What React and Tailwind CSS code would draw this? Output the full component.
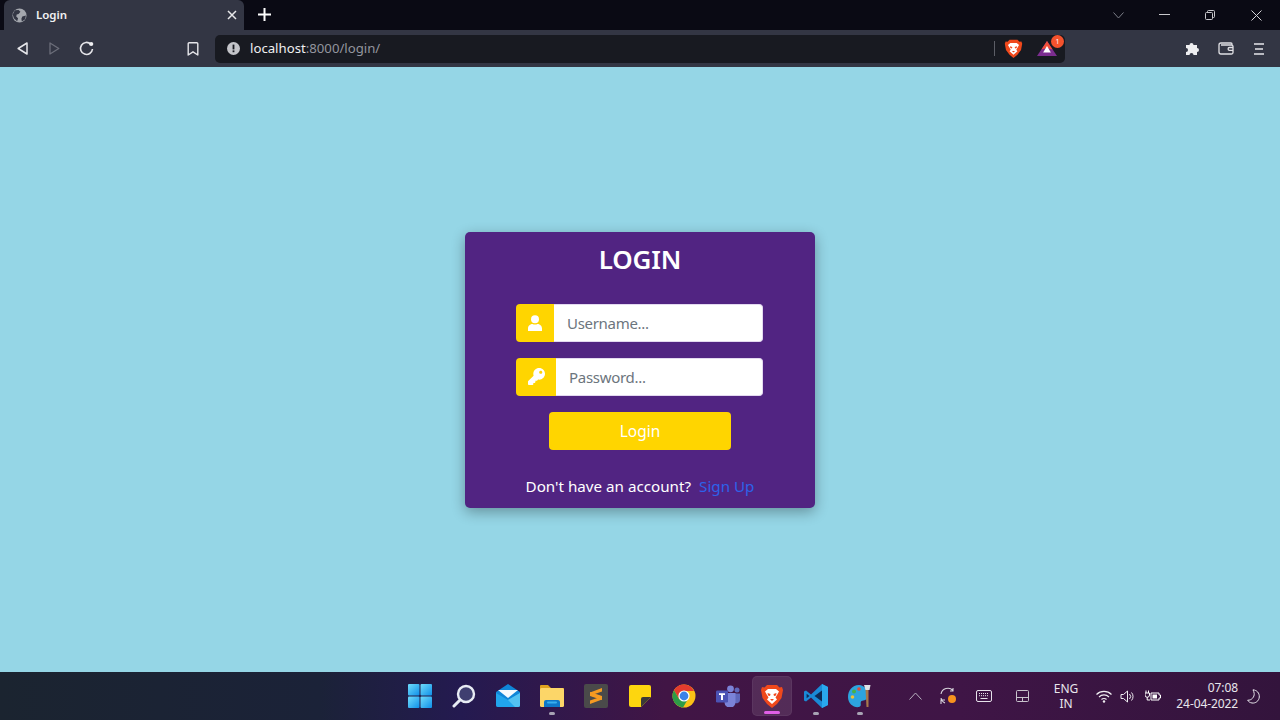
import React from "react";

function Win() {
  return (
    <svg width="24" height="24" viewBox="0 0 24 24">
      <defs>
        <linearGradient id="w" x1="0" y1="0" x2="1" y2="1">
          <stop offset="0" stopColor="#6fdcfb" />
          <stop offset="1" stopColor="#0f8fe8" />
        </linearGradient>
      </defs>
      <rect x="0" y="0" width="11.5" height="11.5" rx="1" fill="url(#w)" />
      <rect x="12.5" y="0" width="11.5" height="11.5" rx="1" fill="url(#w)" />
      <rect x="0" y="12.5" width="11.5" height="11.5" rx="1" fill="url(#w)" />
      <rect x="12.5" y="12.5" width="11.5" height="11.5" rx="1" fill="url(#w)" />
    </svg>
  );
}
function Search() {
  return (
    <svg width="24" height="24" viewBox="0 0 24 24" fill="none">
      <circle cx="14" cy="10" r="8" fill="#3f3f70" stroke="#e8ecf4" strokeWidth="2.4" />
      <path d="M8 16 L2 22" stroke="#e8ecf4" strokeWidth="3" strokeLinecap="round" />
    </svg>
  );
}
function Mail() {
  return (
    <svg width="26" height="24" viewBox="0 0 26 24">
      <path d="M1 8 L13 0 L25 8 V21 a2 2 0 0 1 -2 2 H3 a2 2 0 0 1 -2 -2 Z" fill="#0f86d8" />
      <path d="M3 6 H23 L13 14 Z" fill="#f4fafe" />
      <path d="M1 9 L13 16 L25 9 V21 a2 2 0 0 1 -2 2 H3 a2 2 0 0 1 -2 -2 Z" fill="#21a5ec" />
      <path d="M13 16 L25 9 V21 a2 2 0 0 1 -2 2 H20 Z" fill="#53c2f2" />
    </svg>
  );
}
function Folder() {
  return (
    <svg width="26" height="24" viewBox="0 0 26 24">
      <path d="M1 2 a1 1 0 0 1 1 -1 H9 L12 4 H24 a1 1 0 0 1 1 1 V8 H1 Z" fill="#e0a31f" />
      <rect x="1" y="4" width="24" height="19" rx="1.5" fill="#fcd668" />
      <path d="M5 23 V18 a2 2 0 0 1 2 -2 H19 a2 2 0 0 1 2 2 V23 Z" fill="#0f78c8" />
      <rect x="8" y="17.5" width="10" height="2" rx="1" fill="#39b0ee" />
    </svg>
  );
}
function Sublime() {
  return (
    <svg width="24" height="24" viewBox="0 0 24 24">
      <rect width="24" height="24" rx="2" fill="#4a4a4a" />
      <path d="M18 4 L6 8.5 V12 L18 16 V12.5 L10 10.2 L18 7.5 Z" fill="#f59a22" />
      <path d="M6 20 L18 15.5 V12 L6 8 V11.5 L14 13.8 L6 16.5 Z" fill="#f59a22" />
    </svg>
  );
}
function Sticky() {
  return (
    <svg width="22" height="22" viewBox="0 0 22 22">
      <path d="M0 2 a2 2 0 0 1 2 -2 H20 a2 2 0 0 1 2 2 V12 L12 22 H2 a2 2 0 0 1 -2 -2 Z" fill="#fdd60f" />
      <path d="M12 22 V14 a2 2 0 0 1 2 -2 H22 Z" fill="#3a3a38" />
    </svg>
  );
}
function Chrome() {
  return (
    <svg width="24" height="24" viewBox="0 0 24 24">
      <circle cx="12" cy="12" r="11.5" fill="#fbc116" />
      <path d="M12 .5 A11.5 11.5 0 0 0 2 6.3 L7 15 L12 7 H22 A11.5 11.5 0 0 0 12 .5Z" fill="#e33b2e" />
      <path d="M2 6.3 A11.5 11.5 0 0 0 11 23.5 L16 15 H7 Z" fill="#2d9b47" />
      <circle cx="12" cy="12" r="5.6" fill="#fff" />
      <circle cx="12" cy="12" r="4.4" fill="#3b82e8" />
    </svg>
  );
}
function Teams() {
  return (
    <svg width="24" height="22" viewBox="0 0 24 22">
      <circle cx="14.5" cy="3.8" r="3.4" fill="#7b83d8" />
      <circle cx="21" cy="5" r="2.5" fill="#5f67bb" />
      <path d="M18 8.5 H24 V15 a3.5 3.5 0 0 1 -5 3 Z" fill="#5f67bb" />
      <path d="M8 8 H19.5 V17 a5.5 5.5 0 0 1 -11 .5 Z" fill="#7b83d8" />
      <rect x="0" y="5.5" width="12" height="12" rx="1.3" fill="#4b53b4" />
      <path d="M3 8.3 H9 V10 H7 V15 H5 V10 H3 Z" fill="#fff" />
    </svg>
  );
}
function Lion({ size = 24 }) {
  return (
    <svg width={size} height={size} viewBox="0 0 24 24">
      <path d="M7 1 H17 L19.5 3.5 L22 3 L23 6 L21.5 14 L17 20 L12 24 L7 20 L2.5 14 L1 6 L2 3 L4.5 3.5 Z" fill="#f0491c" />
      <path d="M8 5 H16 L19 7.5 L17 11 L15.5 13.5 L17 15.5 L12 20 L7 15.5 L8.5 13.5 L7 11 L5 7.5 Z" fill="#fff" />
      <path d="M7.5 9 L10.5 10 L10 12 L8 11.5 Z M16.5 9 L13.5 10 L14 12 L16 11.5 Z" fill="#f0491c" />
      <path d="M10 15 H14 L12 17 Z" fill="#f0491c" />
    </svg>
  );
}
function VSCode() {
  return (
    <svg width="26" height="26" viewBox="0 0 26 26">
      <path d="M19 1 L25 4 V22 L19 25 L8 14.5 L3 18.5 L1 17.5 V8.5 L3 7.5 L8 11.5 Z" fill="#1a8ad6" />
      <path d="M19 7.5 L11.5 13 L19 18.5 Z" fill="#0c2a56" />
      <path d="M19 1 L25 4 V22 L19 25 Z" fill="#29a8ee" />
      <path d="M3.6 10.8 L6.5 13 L3.6 15.2 Z" fill="#0c2a56" />
    </svg>
  );
}
function Palette() {
  return (
    <svg width="24" height="24" viewBox="0 0 24 24">
      <path d="M11 1 C4 1 0 7 0 13 C0 20 6 24 11 23 C14 22 12 19 13 17.5 C14 16 19 17 20 13 C21 6 16 1 11 1Z" fill="#2da4de" />
      <circle cx="6" cy="7.5" r="2" fill="#48b04a" />
      <circle cx="11" cy="5" r="1.8" fill="#e24d3a" />
      <circle cx="4.5" cy="13" r="1.8" fill="#f1c232" />
      <path d="M17.5 5 L20.5 5 L20.5 23 L18.5 23 Z" fill="#a8794a" />
      <path d="M16 1 H22.5 L21.5 6 H17.5 Z" fill="#dfe3e6" />
    </svg>
  );
}

const TaskItem = ({ children, dot, active }) => (
  <div className={`relative flex h-10 w-10 items-center justify-center rounded-[5px] ${active ? "bg-white/10 border border-white/5" : ""}`}>
    {children}
    {dot ? (
      <span className={`absolute bottom-[1px] left-1/2 h-[3px] -translate-x-1/2 rounded-full ${active ? "w-4 bg-[#e05fe6]" : "w-[6px] bg-[#a8a3b4]"}`} />
    ) : null}
  </div>
);

export default function App() {
  return (
    <div className="flex h-screen w-full flex-col overflow-hidden bg-[#95d6e6] font-['Noto_Sans','Open_Sans',sans-serif]">
      {/* tab strip */}
      <div className="flex h-[30px] shrink-0 items-end bg-[#0a0a14] pl-1 text-white">
        <div className="flex h-[30px] w-[240px] items-center rounded-t-[6px] bg-[#333644] pl-[8px] pr-[6px]">
          <svg width="15" height="15" viewBox="0 0 16 16">
            <circle cx="8" cy="8" r="7.5" fill="#a4a7ae" />
            <path d="M3 2.5 L7 2 L9 4 L7 6.5 L5 7 L4.5 9 L6.5 11 L5.5 14 L2 11 L.8 7 Z M11 9 L14.8 8 L14 12 L10.5 14.5 L10 11.5 Z" fill="#333644" />
          </svg>
          <span className="ml-[9px] text-[11.5px] font-semibold leading-none text-[#f0f0f2]">Login</span>
          <svg className="ml-auto mr-[1px]" width="10" height="10" viewBox="0 0 10 10">
            <path d="M1 1 L9 9 M9 1 L1 9" stroke="#e8e8ea" strokeWidth="1.5" />
          </svg>
        </div>
        <svg className="mb-[9px] ml-[14px]" width="13" height="13" viewBox="0 0 13 13">
          <path d="M6.5 0 V13 M0 6.5 H13" stroke="#fff" strokeWidth="2" />
        </svg>
        <div className="ml-auto flex h-full items-center">
          <svg className="mr-[35px]" width="11" height="7" viewBox="0 0 11 7" fill="none">
            <path d="M.5 .5 L5.5 6 L10.5 .5" stroke="#7c7e88" strokeWidth="1" />
          </svg>
          <svg className="mr-[35px]" width="11" height="2" viewBox="0 0 11 2">
            <rect width="11" height="1" fill="#c8c8cc" />
          </svg>
          <svg className="mr-[36px]" width="10" height="10" viewBox="0 0 10 10" fill="none">
            <rect x=".5" y="2.5" width="7" height="7" rx="1" stroke="#c8c8cc" />
            <path d="M2.5 2.5 V1.5 a1 1 0 0 1 1 -1 H8.5 a1 1 0 0 1 1 1 V6.5 a1 1 0 0 1 -1 1 H7.5" stroke="#c8c8cc" />
          </svg>
          <svg className="mr-[18px]" width="11" height="11" viewBox="0 0 11 11">
            <path d="M.5 .5 L10.5 10.5 M10.5 .5 L.5 10.5" stroke="#d4d4d8" strokeWidth="1" />
          </svg>
        </div>
      </div>

      {/* toolbar */}
      <div className="flex h-[37px] shrink-0 items-center bg-[#333644] pl-[17px] pr-[17px]">
        <svg width="11" height="13" viewBox="0 0 11 13" fill="none">
          <path d="M10 1 L1.2 6.5 L10 12 Z" stroke="#e6e6ea" strokeWidth="1.5" strokeLinejoin="round" />
        </svg>
        <svg className="ml-[21px]" width="11" height="13" viewBox="0 0 11 13" fill="none">
          <path d="M1 1 L9.8 6.5 L1 12 Z" stroke="#6c6e7a" strokeWidth="1.3" strokeLinejoin="round" />
        </svg>
        <svg className="ml-[19px]" width="15" height="15" viewBox="0 0 15 15" fill="none">
          <path d="M11.8 3.2 A6 6 0 1 0 13.5 8" stroke="#e6e6ea" strokeWidth="1.6" />
          <circle cx="12.2" cy="3" r="2.1" fill="#f0f0f2" />
        </svg>
        <svg className="ml-[93px]" width="12" height="14" viewBox="0 0 12 14" fill="none">
          <path d="M1.2 1.8 a1 1 0 0 1 1 -1 H9.8 a1 1 0 0 1 1 1 V13 L6 9.8 L1.2 13 Z" stroke="#e6e6ea" strokeWidth="1.4" strokeLinejoin="round" />
        </svg>
        <div className="ml-[16px] flex h-[28px] w-[850px] items-center rounded-[5px] bg-[#181a21] pl-[12px]">
          <svg width="13" height="13" viewBox="0 0 13 13">
            <circle cx="6.5" cy="6.5" r="6.5" fill="#c4c5ca" />
            <rect x="5.6" y="2.6" width="1.8" height="4.8" fill="#181a21" />
            <rect x="5.6" y="8.4" width="1.8" height="1.8" fill="#181a21" />
          </svg>
          <span className="ml-[10px] text-[13.2px] leading-none text-[#f0f0f2]">localhost</span>
          <span className="text-[13.2px] leading-none text-[#93959e]">:8000/login/</span>
          <div className="ml-auto flex items-center">
            <div className="h-[15px] w-px bg-[#5c5e66]" />
            <div className="ml-[9px] flex">
              <Lion size={19} />
            </div>
            <div className="relative ml-[14px] mr-[8px] flex">
              <svg width="20" height="15" viewBox="0 0 18 15" preserveAspectRatio="none">
                <path d="M9 0 L18 15 H0 Z" fill="#7b2d8f" />
                <path d="M9 0 L14 8.5 L9 7 L4 8.5 Z" fill="#f2503a" />
                <path d="M9 5 L12.5 11.5 H5.5 Z" fill="#fff" />
              </svg>
              <span className="absolute -right-[7px] -top-[6px] flex h-[13px] w-[13px] items-center justify-center rounded-full bg-[#f4522d] text-[7px] leading-none text-white">1</span>
            </div>
          </div>
        </div>
        <div className="ml-auto flex items-center">
          <svg width="15" height="15" viewBox="0 0 15 15">
            <path d="M1 4 H4.5 a2 2 0 1 1 4 0 H12 V7 a2 2 0 1 1 0 4 V14 H8.5 a2 2 0 1 0 -4 0 H1 V11 a2 2 0 1 0 0 -4 Z" fill="#eeeef0" />
          </svg>
          <svg className="ml-[18px]" width="16" height="13" viewBox="0 0 16 13" fill="none">
            <path d="M14 3 V2 a1 1 0 0 0 -1 -1 H3 a2 2 0 0 0 -2 2 V10 a2 2 0 0 0 2 2 H13.5 a1.5 1.5 0 0 0 1.5 -1.5 V4.5 A1.5 1.5 0 0 0 13.5 3 H3" stroke="#e0e0e4" strokeWidth="1.3" />
            <path d="M15 5.5 H11.5 a1.2 1.2 0 0 0 0 2.8 H15" stroke="#e0e0e4" strokeWidth="1.3" />
          </svg>
          <svg className="ml-[20px] mr-[-1px]" width="10" height="12" viewBox="0 0 10 12">
            <path d="M0 1 H10 M1 6 H9 M0 11 H10" stroke="#e6e6ea" strokeWidth="1.4" />
          </svg>
        </div>
      </div>

      {/* page */}
      <main className="flex flex-1 items-center justify-center">
        <div className="flex h-[276px] w-[350px] flex-col items-center rounded-[5px] bg-[#512482] pt-[9px] text-white shadow-[0_4px_14px_rgba(0,0,0,0.32)]">
          <h1 className="h-[36px] text-[26px] font-semibold leading-[36px] tracking-[-0.2px]">LOGIN</h1>
          <div className="mr-px mt-[27px] flex h-[38px] w-[247px]">
            <div className="flex w-[38px] items-center justify-center rounded-l-[4px] bg-[#ffd500]">
              <svg width="16" height="16" viewBox="0 0 16 16" fill="#fff">
                <circle cx="8" cy="4.2" r="4" />
                <path d="M1 16 V13.5 C1 10.5 3.5 9 5.5 9 C7 9.8 9 9.8 10.5 9 C12.5 9 15 10.5 15 13.5 V16 Z" />
              </svg>
            </div>
            <div className="flex flex-1 items-center rounded-r-[4px] border border-[#e3d9f0] border-l-0 bg-white pl-[13px] pt-px text-[15px] tracking-[-0.3px] text-[#6c757d]">Username...</div>
          </div>
          <div className="mr-px mt-[16px] flex h-[38px] w-[247px]">
            <div className="flex w-[40px] items-center justify-center rounded-l-[4px] bg-[#ffd500]">
              <svg width="17" height="17" viewBox="0 0 512 512" fill="#fff">
                <path d="M512 176.001C512 273.203 433.202 352 336 352c-11.22 0-22.19-1.062-32.827-3.069l-24.012 27.014A23.999 23.999 0 0 1 261.223 384H224v40c0 13.255-10.745 24-24 24h-40v40c0 13.255-10.745 24-24 24H24c-13.255 0-24-10.745-24-24v-78.059c0-6.365 2.529-12.47 7.029-16.971l161.802-161.802C163.108 213.814 160 195.271 160 176 160 78.798 238.797.001 335.999 0 433.488-.001 512 78.511 512 176.001zM336 128c0 26.51 21.49 48 48 48s48-21.49 48-48-21.49-48-48-48-48 21.49-48 48z" />
              </svg>
            </div>
            <div className="flex flex-1 items-center rounded-r-[4px] border border-[#e3d9f0] border-l-0 bg-white pl-[13px] pt-px text-[15px] tracking-[-0.3px] text-[#6c757d]">Password...</div>
          </div>
          <button className="mt-[16px] h-[38px] w-[182px] rounded-[4px] bg-[#ffd500] pt-[2px] text-[15.5px] text-white">Login</button>
          <p className="mt-[25px] text-[15.2px] leading-[22px]">
            Don't have an account?<a className="ml-[8px] text-[#2d62ea]">Sign Up</a>
          </p>
        </div>
      </main>

      {/* taskbar */}
      <footer className="flex h-[48px] shrink-0 items-center bg-[linear-gradient(90deg,#1b2430_0%,#1b2238_25%,#241a50_36%,#411545_52%,#3f1546_75%,#33143c_100%)] text-[#eceaf0]">
        <div className="ml-[400px] flex w-[484px] items-center gap-[4px]">
          <TaskItem><Win /></TaskItem>
          <TaskItem><Search /></TaskItem>
          <TaskItem><Mail /></TaskItem>
          <TaskItem dot><Folder /></TaskItem>
          <TaskItem><Sublime /></TaskItem>
          <TaskItem><Sticky /></TaskItem>
          <TaskItem><Chrome /></TaskItem>
          <TaskItem><Teams /></TaskItem>
          <TaskItem dot active><Lion /></TaskItem>
          <TaskItem dot><VSCode /></TaskItem>
          <TaskItem dot><Palette /></TaskItem>
        </div>
        <svg className="ml-[25px]" width="13" height="8" viewBox="0 0 13 8" fill="none">
          <path d="M.5 7.5 L6.5 1 L12.5 7.5" stroke="#b9b2c0" />
        </svg>
        <svg className="ml-[17px]" width="18" height="18" viewBox="0 0 18 18" fill="none">
          <path d="M2 7 A7 7 0 0 1 14 3.5 M14 1 V4 H11 M2 11 A7 7 0 0 0 6 16 M2 17 V13 H6" stroke="#d8d4dc" strokeWidth="1.1" />
          <circle cx="13" cy="12" r="4" fill="#f7931e" />
        </svg>
        <svg className="ml-[19px]" width="16" height="12" viewBox="0 0 16 12" fill="none">
          <rect x=".5" y=".5" width="15" height="11" rx="1.5" stroke="#e6e2ea" />
          <path d="M3 3.5 H13 M3 5.7 H13" stroke="#e6e2ea" strokeDasharray="1 1" />
          <path d="M4.5 8.5 H11.5" stroke="#e6e2ea" />
        </svg>
        <svg className="ml-[24px]" width="13" height="12" viewBox="0 0 13 12" fill="none">
          <rect x=".5" y=".5" width="12" height="11" rx="1" stroke="#c8c4cc" />
          <path d="M.5 7.5 H12.5 M6.5 7.5 V11.5" stroke="#c8c4cc" />
        </svg>
        <div className="ml-[24px] w-[26px] whitespace-nowrap text-center text-[12px] leading-[15px] text-[#e8e6ec]">
          ENG
          <br />
          IN
        </div>
        <svg className="ml-[17px]" width="16" height="13" viewBox="0 0 16 13" fill="none">
          <path d="M.5 4.5 A10.5 10.5 0 0 1 15.5 4.5 M3 7 A7 7 0 0 1 13 7 M5.5 9.5 A3.5 3.5 0 0 1 10.5 9.5" stroke="#f0eef2" strokeWidth="1.1" />
          <circle cx="8" cy="11.5" r="1.2" fill="#f0eef2" />
        </svg>
        <svg className="ml-[8px]" width="16" height="13" viewBox="0 0 16 13" fill="none">
          <path d="M1 4.5 H3.5 L7.5 1 V12 L3.5 8.5 H1 Z" stroke="#f0eef2" strokeLinejoin="round" />
          <path d="M9.5 4 A3.5 3.5 0 0 1 9.5 9 M11.5 2.5 A6 6 0 0 1 11.5 10.5" stroke="#f0eef2" />
        </svg>
        <svg className="ml-[9px]" width="16" height="12" viewBox="0 0 16 12" fill="none">
          <path d="M1 3 V0.5 M3.5 3 V0.5 M0 3 H4.5 V5 A2 2 0 0 1 0 5 Z M2.2 7 V10 H5" stroke="#fff" strokeWidth="1" />
          <path d="M6 3 H14 V5 H15.5 V8 H14 V10 H6 Z" stroke="#fff" />
          <rect x="7.5" y="4.5" width="4.5" height="4" fill="#fff" />
        </svg>
        <div className="ml-[15px] w-[62px] whitespace-nowrap text-right text-[12px] leading-[16px] text-[#e8e6ec] tracking-[-0.1px]">
          <div>07:08</div>
          <div>24-04-2022</div>
        </div>
        <svg className="ml-[9px]" width="13" height="15" viewBox="0 0 13 15" fill="none">
          <path d="M6 .8 C10 1.2 12.5 4 12.3 8 C12 12 8.5 14.5 5 14 C3 13.7 1.5 12.8 .7 11.2 C4.5 11.5 7.5 8 7.2 4.5 C7 3.2 6.6 2 6 .8Z" stroke="#e8e6ec" />
        </svg>
      </footer>
    </div>
  );
}
